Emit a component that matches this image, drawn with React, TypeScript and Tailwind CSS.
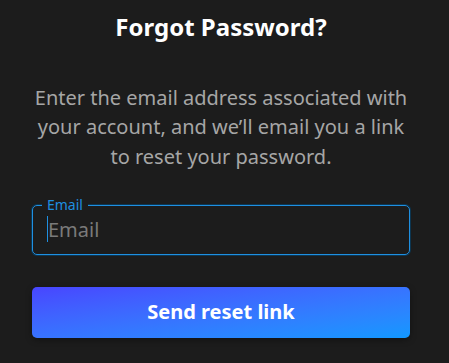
export default function App() {
  return (
    <div
      className="min-h-[363px] w-full bg-[#1c1c1c] pt-[9px]"
      style={{ fontFamily: '"Noto Sans", "Open Sans", sans-serif' }}
    >
      <div className="ml-8 w-[378px]">
        <h1 className="text-center text-[24px] font-bold leading-[36px] text-white">
          Forgot Password?
        </h1>

        <p className="mt-[38px] text-center text-[20px] leading-[29.3px] text-[#a6a6a6]">
          Enter the email address associated with your account, and we’ll email you a link to reset your password.
        </p>

        <div className="relative mt-[34px] rounded-[5px] border border-[#1f8fe0] shadow-[0_0_0_1px_#0c3550]">
          <span className="absolute left-[9px] top-[-9px] bg-[#1c1c1c] px-[5px] text-[14px] leading-[16px] text-[#1f8fe0]">
            Email
          </span>
          {/* text caret of the focused field */}
          <span className="pointer-events-none absolute left-[14px] top-[10px] h-[26px] w-px bg-[#1f8fe0]" />
          <input
            type="email"
            placeholder="Email"
            className="h-[48px] w-full rounded-[5px] bg-transparent pl-[15px] pr-[14px] text-[20px] text-white caret-transparent placeholder:text-[#7a7a7a] outline-none"
          />
        </div>

        <button className="mt-[32px] h-[51px] w-full rounded-[5px] bg-gradient-to-br from-[#4845ff] to-[#0f98ff] text-[20px] font-bold text-white shadow-[0_2px_6px_rgba(0,0,0,0.35)]">
          Send reset link
        </button>
      </div>
    </div>
  );
}
